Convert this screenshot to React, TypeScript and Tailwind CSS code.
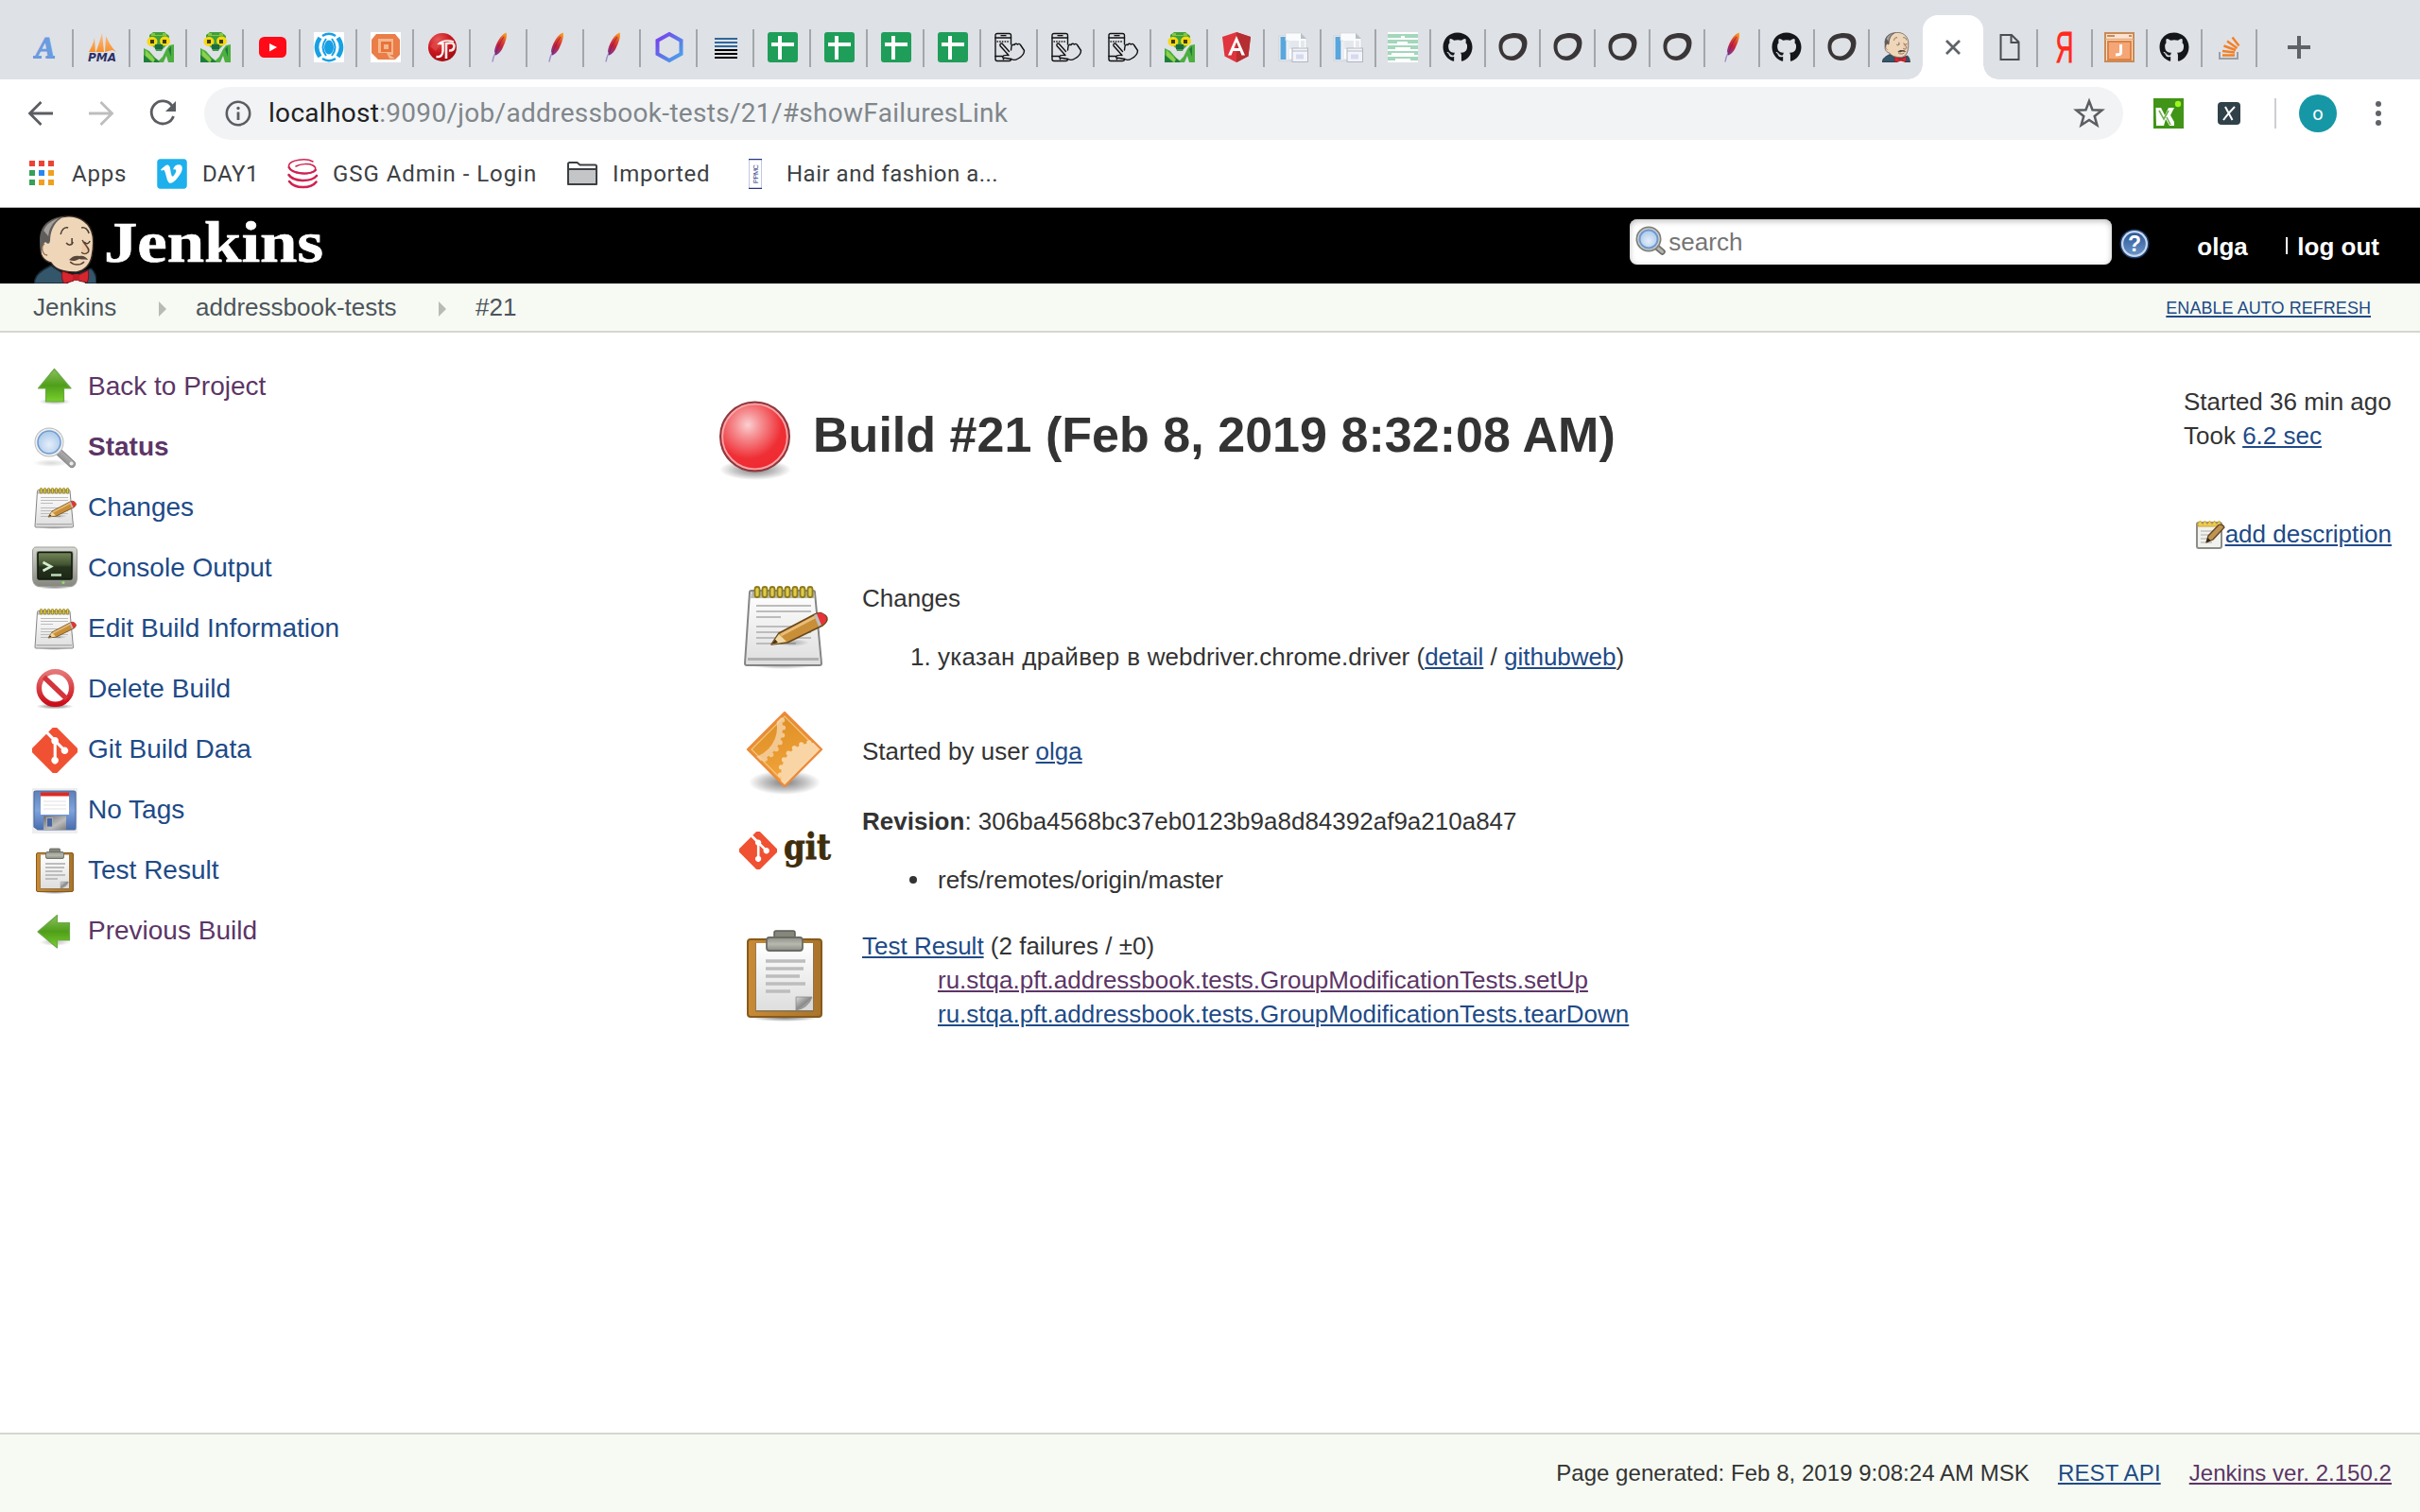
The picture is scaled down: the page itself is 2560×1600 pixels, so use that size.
import React from "react";
import { FaGitAlt, FaGithub, FaVimeo } from "react-icons/fa";

const HELV = "font-['Liberation_Sans',Arial,sans-serif]";
const UI = "font-[Roboto,sans-serif]";

function Svg({ s = 32, vb = "0 0 32 32", children, className = "" }: { s?: number; vb?: string; children: React.ReactNode; className?: string }) {
  return (
    <svg width={s} height={s} viewBox={vb} className={"block shrink-0 overflow-visible " + className}>
      {children}
    </svg>
  );
}

/* ---------- shared gradients ---------- */
function Defs() {
  return (
    <svg width="0" height="0" className="absolute">
      <defs>
        <linearGradient id="feather" x1="0.7" y1="0" x2="0.3" y2="1">
          <stop offset="0" stopColor="#f79a23" />
          <stop offset="0.3" stopColor="#e2492b" />
          <stop offset="0.6" stopColor="#c4203f" />
          <stop offset="1" stopColor="#7b3a97" />
        </linearGradient>
        <linearGradient id="hex" x1="0" y1="0" x2="1" y2="1">
          <stop offset="0" stopColor="#7a3cf0" />
          <stop offset="0.5" stopColor="#5f72e8" />
          <stop offset="1" stopColor="#48a8ea" />
        </linearGradient>
        <linearGradient id="pma" x1="0" y1="0" x2="0" y2="1">
          <stop offset="0" stopColor="#fbc08a" />
          <stop offset="1" stopColor="#f7902a" />
        </linearGradient>
        <linearGradient id="green" x1="0" y1="0" x2="0" y2="1">
          <stop offset="0" stopColor="#8cc05e" />
          <stop offset="0.5" stopColor="#4f9e1a" />
          <stop offset="1" stopColor="#78d02c" />
        </linearGradient>
        <radialGradient id="lens" cx="0.5" cy="0.6" r="0.6">
          <stop offset="0" stopColor="#e6effa" />
          <stop offset="1" stopColor="#a9c8ea" />
        </radialGradient>
        <linearGradient id="handle" x1="0" y1="1" x2="1" y2="0">
          <stop offset="0" stopColor="#7d7d7d" />
          <stop offset="1" stopColor="#c4c4c4" />
        </linearGradient>
        <linearGradient id="paper" x1="0" y1="0" x2="0" y2="1">
          <stop offset="0" stopColor="#ffffff" />
          <stop offset="1" stopColor="#dedede" />
        </linearGradient>
        <linearGradient id="bezel" x1="0" y1="0" x2="0" y2="1">
          <stop offset="0" stopColor="#d6d8d2" />
          <stop offset="1" stopColor="#85877f" />
        </linearGradient>
        <linearGradient id="crt" x1="0" y1="0" x2="0" y2="1">
          <stop offset="0" stopColor="#75875a" />
          <stop offset="0.45" stopColor="#435432" />
          <stop offset="0.55" stopColor="#26331d" />
          <stop offset="1" stopColor="#1c2715" />
        </linearGradient>
        <linearGradient id="stop" x1="0" y1="0" x2="0" y2="1">
          <stop offset="0" stopColor="#e67676" />
          <stop offset="1" stopColor="#cc0c18" />
        </linearGradient>
        <linearGradient id="floppy" x1="0" y1="0" x2="0" y2="1">
          <stop offset="0" stopColor="#5d80b8" />
          <stop offset="0.5" stopColor="#7fa4dc" />
          <stop offset="1" stopColor="#4a6cae" />
        </linearGradient>
        <linearGradient id="shutter" x1="0" y1="0" x2="1" y2="1">
          <stop offset="0" stopColor="#6d6d6d" />
          <stop offset="0.6" stopColor="#bcbcbc" />
          <stop offset="1" stopColor="#7e7e7e" />
        </linearGradient>
        <linearGradient id="board" x1="0" y1="0" x2="1" y2="0">
          <stop offset="0" stopColor="#c98a35" />
          <stop offset="1" stopColor="#a9742b" />
        </linearGradient>
        <linearGradient id="clip" x1="0" y1="0" x2="0" y2="1">
          <stop offset="0" stopColor="#8f9087" />
          <stop offset="0.5" stopColor="#b7b8ae" />
          <stop offset="1" stopColor="#8b8c83" />
        </linearGradient>
        <linearGradient id="curl" x1="0" y1="0" x2="1" y2="1">
          <stop offset="0" stopColor="#dddddd" />
          <stop offset="0.5" stopColor="#8a8a8a" />
          <stop offset="1" stopColor="#f4f4f4" />
        </linearGradient>
        <radialGradient id="ball" cx="0.4" cy="0.33" r="0.7">
          <stop offset="0" stopColor="#fbd0d2" />
          <stop offset="0.25" stopColor="#f69295" />
          <stop offset="0.7" stopColor="#ef2f35" />
          <stop offset="1" stopColor="#ef2930" />
        </radialGradient>
        <radialGradient id="shade">
          <stop offset="0" stopColor="#000" stopOpacity="0.5" />
          <stop offset="0.6" stopColor="#000" stopOpacity="0.22" />
          <stop offset="1" stopColor="#000" stopOpacity="0" />
        </radialGradient>
        <linearGradient id="sign" x1="0" y1="0" x2="0.3" y2="1">
          <stop offset="0" stopColor="#d98a22" />
          <stop offset="1" stopColor="#f3a43a" />
        </linearGradient>
        <radialGradient id="jr" cx="0.35" cy="0.25" r="0.9">
          <stop offset="0" stopColor="#ea5a5a" />
          <stop offset="0.5" stopColor="#c9141c" />
          <stop offset="1" stopColor="#8e0a10" />
        </radialGradient>
        <linearGradient id="help" x1="0" y1="0" x2="0" y2="1">
          <stop offset="0" stopColor="#2b5797" />
          <stop offset="1" stopColor="#6a94c8" />
        </linearGradient>
        <clipPath id="diamond">
          <path d="M48 6 L86 45 L48 84 L9 45 Z" />
        </clipPath>
      </defs>
    </svg>
  );
}

/* ---------- tab favicons ---------- */
const LetterA = () => (
  <Svg>
    <path d="M3 26.500 H12 M17 26.500 H26" stroke="#6b9be0" strokeWidth="3" />
    <text x="16" y="27" fontSize="32" fontWeight="700" fontStyle="italic" textAnchor="middle" fill="#6b9be0" stroke="#6b9be0" strokeWidth="1" fontFamily="Liberation Serif">A</text>
  </Svg>
);
const Pma = () => (
  <Svg>
    <path d="M2 21 C4 17 7 12 8 6 L9 21 Z M9.500 21 C12 14 14 8 16 1 L18 21 Z M19 21 L20 4 C23 10 25 15 31 21 L27 19 Z" fill="url(#pma)" />
    <text x="16" y="31" fontSize="12.500" fontWeight="700" fontStyle="italic" textAnchor="middle" textLength="30" lengthAdjust="spacingAndGlyphs" fill="#2d3067" fontFamily="DejaVu Sans">PMA</text>
  </Svg>
);
const Frog = () => (
  <Svg>
    <path d="M6 3 L10 0 L22 0 L27 4 L26 12 L20 18 L19 20 L13 20 L12 17 L6 12 Z" fill="#3f9f3d" />
    <path d="M8 1 H12 V3 H20 V1 H24 V4 H8 Z" fill="#86c440" />
    <path d="M0 17 L6 20 L12 27 L16 30 L20 26 L24 18 L27 14 L32 13 V32 H26 L24 25 L21 32 H0 Z" fill="#4caf3f" />
    <path d="M0 24 L9 32 H0 Z M26 18 L29 15 V26 Z M10 26 L17 32 H11 Z" fill="#1f7d3a" />
    <path d="M2 19 L12 29 L10 32 L2 25 Z" fill="#8ed04d" />
    <ellipse cx="9" cy="10" rx="5.500" ry="5" fill="#f7d90f" />
    <ellipse cx="22.500" cy="9.500" rx="5.500" ry="5" fill="#f7d90f" />
    <rect x="7" y="8" width="4" height="4" fill="#3c3a12" />
    <rect x="20" y="8" width="4" height="4" fill="#3c3a12" />
    <path d="M12 13 H20 V18 H12 Z" fill="#1c6b45" />
  </Svg>
);
const YouTube = () => (
  <Svg>
    <rect x="2" y="5" width="29" height="22" rx="5.500" fill="#ff0a16" />
    <path d="M13 12 L21 16 L13 20.500 Z" fill="#fff" />
  </Svg>
);
const BlueO = () => (
  <Svg>
    <rect width="32" height="32" fill="#fff" />
    <g fill="none" stroke="#18a0e4">
      <path d="M9 4 Q16 -0.500 23 4" strokeWidth="2.600" />
      <path d="M9 28 Q16 32.500 23 28" strokeWidth="2.600" />
      <path d="M6.500 6 Q-0.500 16 6.500 26" strokeWidth="4.600" />
      <path d="M25.500 6 Q32.500 16 25.500 26" strokeWidth="4.600" />
      <path d="M13 7 Q6 16 13 25" strokeWidth="2" />
      <path d="M19 7 Q26 16 19 25" strokeWidth="2" />
    </g>
    <ellipse cx="16" cy="16" rx="5" ry="7.500" fill="#18a0e4" />
  </Svg>
);
const OrangeQ = () => (
  <Svg>
    <rect width="32" height="32" fill="#fff" />
    <path d="M6 2 H26 L31 8 V24 L26 29 H8 L1 22 V8 Z" fill="#ea7d48" />
    <path d="M8 7 H24 V24 H20 L26 28 H20 L17 22 H8 Z" fill="#f5b78d" />
    <rect x="11" y="10" width="11" height="11" fill="#e8743c" />
    <rect x="14" y="13" width="5" height="5" fill="#f5b78d" />
  </Svg>
);
const JRebel = () => (
  <Svg>
    <circle cx="16" cy="16" r="15" fill="url(#jr)" />
    <path d="M3 15 Q12 5 28 8 Q16 8 9 20 Z" fill="#e04848" opacity="0.700" />
    <path d="M13 12 H16.500 V20 Q16 27 9.500 26" stroke="#fff" strokeWidth="2.400" fill="none" />
    <path d="M20 28 V12 Q28.500 10 28.500 15 Q28 20 23 19.500" stroke="#f6eaea" strokeWidth="2.600" fill="none" />
    <path d="M11 13 Q18 7 28 10" stroke="#fff" strokeWidth="1.600" fill="none" />
  </Svg>
);
const Feather = () => (
  <Svg>
    <path d="M23.500 0.500 C25 3 23 10 20 16 C18 20.500 15 24 12 24.500 L11 20 C12 13 18 2 23.500 0.500 Z" fill="url(#feather)" />
    <path d="M12 22 C10.500 25 9.500 28 9 31.500" stroke="#9c8fc6" strokeWidth="1.400" fill="none" />
    <path d="M21 5 C17 11 14 17 12 24" stroke="#7e1740" strokeWidth="0.700" fill="none" />
  </Svg>
);
const Hexagon = () => (
  <Svg>
    <path d="M16 2 L28.500 9 V23 L16 30 L3.500 23 V9 Z" fill="none" stroke="url(#hex)" strokeWidth="4" />
  </Svg>
);
const Lines = () => (
  <Svg>
    <path d="M4 7 H28 M4 11 H28 M4 15 H28" stroke="#2f679c" strokeWidth="2" />
    <path d="M4 19 H28 M4 23 H28 M4 27 H28" stroke="#000" strokeWidth="2" />
  </Svg>
);
const Sheet = () => (
  <Svg>
    <rect width="32" height="32" rx="3" fill="#1f9e5a" />
    <path d="M11 4 H15 V29 H11 Z M4 11 H28 V15 H4 Z" fill="#fff" />
  </Svg>
);
const PhoneHand = () => (
  <Svg>
    <g fill="none" stroke="#111" strokeWidth="1.400" strokeLinejoin="round" strokeLinecap="round">
      <path d="M17.500 13 V3.500 Q17.500 1.500 15.500 1.500 H3 Q1 1.500 1 3.500 V28.500 Q1 30.500 3 30.500 H15.500 Q17.500 30.500 17.500 28.500" />
      <path d="M1 6 H17.500 M1 25.500 H8" />
      <path d="M3 10 H15.500" strokeDasharray="0.500 2.200" />
      <path d="M15.500 20.500 L8 12 Q5.500 11.500 6 14.500 L15 24.500 Q9 24 8.500 26 Q8.500 27.500 12 27.500 L18 28.500 Q21 30.500 25 28 Q31.500 24.500 31.500 19.500 L27.500 13.500 Q26 11.500 24.500 13 Q22.500 11.500 21 13.500 Q19 12.500 18 15 L17.500 19" />
    </g>
    <rect x="6.500" y="3" width="6" height="1.300" fill="#111" />
    <circle cx="9.500" cy="28.500" r="0.900" fill="#111" />
  </Svg>
);
const AngularMark = () => (
  <Svg>
    <path d="M16 0 L31 5 L28.500 25.500 L16 32 L3.500 25.500 L1 5 Z" fill="#e0343e" />
    <path d="M16 0 L31 5 L28.500 25.500 L16 32 Z" fill="#b52e31" />
    <path d="M16 4 L7 24.500 H10.500 L12.300 20 H19.700 L21.500 24.500 H25 Z M16 10.500 L18.600 17 H13.400 Z" fill="#fff" fillRule="evenodd" />
  </Svg>
);
const DocPages = () => (
  <Svg>
    <rect x="1" y="4" width="25" height="26" fill="#f4f6f8" stroke="#c6cdd4" strokeWidth="0.800" />
    <rect x="2.500" y="5" width="6" height="24" fill="#5aa6dc" />
    <path d="M8 1 H24 L30 7 V29 H11 V9 H8 Z" fill="#fafbfc" stroke="#d3d6da" strokeWidth="0.700" />
    <path d="M24 1 V7 H30 Z" fill="#b9bfc5" />
    <path d="M12 9 H22 V18 H12 Z M24 9 H28 V16 H24 Z" fill="#e4e8ee" />
    <rect x="15" y="17" width="16.500" height="14.500" fill="#f3f4fb" stroke="#a4a8b0" strokeWidth="0.800" />
    <path d="M15 20 H31" stroke="#b4b9c2" strokeWidth="1" />
    <rect x="19" y="23.500" width="8" height="5" fill="#d6daee" />
  </Svg>
);
const GreenStripes = () => (
  <Svg>
    <rect width="32" height="32" fill="#fff" />
    <path d="M0 2 H32 V6 H0 Z M0 8 H32 V12 H0 Z M0 14 H32 V18 H0 Z M0 20 H32 V24 H0 Z M0 26 H32 V30 H0 Z" fill="#a3d7bb" />
    <path d="M14 4 H18 V6 H14 Z M10 10 H21 V12 H10 Z M8 16 H24 V18 H8 Z M4 22 H28 V24 H4 Z M8 28 H24 V30 H8 Z" fill="#fff" />
  </Svg>
);
const GitHub = () => <FaGithub size={32} color="#14161a" className="block shrink-0" />;
const Ring = () => (
  <Svg>
    <path
      d="M14 1.500 C22 0 32 2 31.500 12 C31 24 22 30.500 15 30 C6 29.500 1 22 1.500 14 C2 6 7 2.500 14 1.500 Z M14.500 6.500 C8 7.500 5 11 5.500 17 C6 22 9 25.500 14.500 25.500 C20 25.500 26 19 26 13 C26 7 20 5.500 14.500 6.500 Z"
      fill="#3a3637"
      fillRule="evenodd"
    />
  </Svg>
);
function Butler({ s = 32 }: { s?: number }) {
  return (
    <svg width={s * 0.92} height={s} viewBox="0 0 66 72" className="block shrink-0">
      <path d="M0 72 C1 62 8 58 18 53 L32 62 H46 L60 56 C65 60 66 66 66 72 Z" fill="#33566b" stroke="#1a2a35" strokeWidth="1.500" />
      <path d="M7 25 C6 10 18 2 34 1 C48 0 60 8 62 22 C63 30 62 38 61 43 C59 53 54 58 45 60 C33 60 22 57 18 50 C10 48 6 42 7 35 C8 30 9 28 7 25 Z" fill="#efd6b8" stroke="#3a2f28" strokeWidth="1.300" />
      <path d="M6 30 C5 12 14 3 32 1 C22 6 18 14 17 24 C17 32 14 30 12 28 C9 30 8 34 8 38 C6 36 6 33 6 30 Z" fill="#5f5c5c" />
      <path d="M10 16 C13 9 19 5 26 3 C19 8 16 14 15 22 Z" fill="#a39f9c" />
      <path d="M28 20 C29 15 32 12 36 13 M50 13 C54 12 57 15 58 19" stroke="#4a3d34" strokeWidth="1.500" fill="none" />
      <path d="M34 29 C36 32 40 32 41 28 M40 24 V29 M53 28 C55 31 58 30 59 27" stroke="#4a3d34" strokeWidth="1.500" fill="none" />
      <path d="M51 26 C53 31 60 35 57 39 C55 41 52 41 50 39" stroke="#5a4335" strokeWidth="1.500" fill="#efc9a6" />
      <path d="M37 47 C40 43 44 42 48 43 C52 42 55 44 57 47 C53 46 50 47 48 46 C44 48 41 49 37 47 Z" fill="#5a473c" />
      <path d="M38 49 C42 53 49 53 53 49" stroke="#5a4335" strokeWidth="1.500" fill="none" />
      <path d="M11 30 C7 32 8 42 14 42" stroke="#8a6a50" strokeWidth="1.300" fill="none" />
      <path d="M38 66 L50 66 L54 72 H36 Z" fill="#f4f4f4" />
      <path d="M30 59 L42 63 V69 L32 72 C29 68 29 63 30 59 Z M57 58 L47 63 V69 L56 71 C58 67 58 62 57 58 Z" fill="#d8262f" stroke="#7c1218" strokeWidth="1" />
      <rect x="41" y="62" width="7" height="7" rx="2" fill="#c01f28" />
    </svg>
  );
}
const FileIcon = () => (
  <Svg>
    <path d="M6.500 3 H18 L25.500 10.500 V29 H6.500 Z M17.500 3 V11 H25.500" fill="none" stroke="#4a4d51" strokeWidth="2" />
  </Svg>
);
const Ya = () => (
  <Svg>
    <text x="16" y="32" fontSize="46" textAnchor="middle" textLength="19" lengthAdjust="spacingAndGlyphs" fill="#ff2a1c" stroke="#ff2a1c" strokeWidth="0.800" fontFamily="Liberation Sans">Я</text>
  </Svg>
);
const OrangeJ = () => (
  <Svg>
    <rect x="1" y="1" width="30" height="30" fill="#fbe3d0" stroke="#c98a58" strokeWidth="2" />
    <path d="M3 3 H11 V5 H3 Z M26 3 H29 V5 H26 Z" fill="#c98a58" />
    <path d="M1 7.500 H31" stroke="#e3a97d" strokeWidth="1.500" />
    <rect x="4" y="10" width="24" height="19" fill="#f5a676" stroke="#dd8244" strokeWidth="2" />
    <path d="M17.500 13 V22 Q17.500 24 12 24" stroke="#fff" strokeWidth="3" fill="none" />
  </Svg>
);
const StackO = () => (
  <Svg>
    <path d="M6 21 V28 H25 V21" stroke="#9aa0a6" strokeWidth="2" fill="none" />
    <path d="M9 24.500 H22 M9 20 L22 21.500 M10.500 14.500 L23 19 M14 9.500 L24.500 17 M19.500 5.500 L26.500 14.500" stroke="#f48024" strokeWidth="2.400" />
  </Svg>
);

const wideTabs = [LetterA, Pma, Frog, Frog, YouTube, BlueO, OrangeQ, JRebel, Feather, Feather, Feather, Hexagon, Lines, Sheet, Sheet, Sheet, Sheet, PhoneHand, PhoneHand, PhoneHand, Frog, AngularMark, DocPages];
const narrowTabs = [DocPages, GreenStripes, GitHub, Ring, Ring, Ring, Ring, Feather, GitHub, Ring];
const rightTabs = [FileIcon, Ya, OrangeJ, GitHub, StackO];

function Tab({ w, children, sep = true }: { w: string; children: React.ReactNode; sep?: boolean }) {
  return (
    <div className={"relative flex h-full shrink-0 items-center justify-center " + w}>
      {children}
      {sep && <span className="absolute right-0 top-[15px] h-10 w-[2px] bg-[#a3a7ab]" />}
    </div>
  );
}

function TabStrip() {
  return (
    <div className="flex h-[84px] items-end bg-[#dee1e6] pl-[18px]">
      <div className="flex h-[68px]">
        {wideTabs.map((I, i) => (
          <Tab key={i} w="w-[60px]"><I /></Tab>
        ))}
        {narrowTabs.map((I, i) => (
          <Tab key={i} w="w-[58px] pr-[2px]"><I /></Tab>
        ))}
        <Tab w="w-14" sep={false}><Butler /></Tab>
        <div className="relative flex h-[68px] w-16 shrink-0 items-center justify-center rounded-t-[16px] bg-white">
          <span className="absolute bottom-0 -left-4 size-4 bg-[radial-gradient(circle_at_0_0,transparent_15.5px,white_16px)]" />
          <span className="absolute bottom-0 -right-4 size-4 bg-[radial-gradient(circle_at_100%_0,transparent_15.5px,white_16px)]" />
          <Svg s={16} vb="0 0 16 16"><path d="M1 1 L15 15 M15 1 L1 15" stroke="#5f6368" strokeWidth="2.800" /></Svg>
        </div>
        {rightTabs.map((I, i) => (
          <Tab key={i} w="w-[58px] pr-[2px]"><I /></Tab>
        ))}
        <div className="flex w-[88px] items-center justify-center">
          <Svg s={24} vb="0 0 24 24"><path d="M12 0 V24 M0 12 H24" stroke="#5f6368" strokeWidth="4" /></Svg>
        </div>
      </div>
    </div>
  );
}

/* ---------- toolbar ---------- */
function Arrow({ color, flip = false }: { color: string; flip?: boolean }) {
  return (
    <Svg className={flip ? "-scale-x-100" : ""}>
      <path d="M29 16 H5 M16.500 4 L4.500 16 L16.500 28" stroke={color} strokeWidth="2.800" fill="none" />
    </Svg>
  );
}

function Toolbar() {
  return (
    <div className="flex h-[72px] items-center bg-white pl-[27px]">
      <Arrow color="#5a5d61" />
      <div className="ml-8"><Arrow color="#bdbdbd" flip /></div>
      <div className="ml-[33px]">
        <Svg>
          <path d="M26 8 A 12 12 0 1 0 27.500 19" fill="none" stroke="#5a5d61" strokeWidth="2.800" />
          <path d="M30 3 V14 H19 Z" fill="#5a5d61" />
        </Svg>
      </div>
      <div className="ml-7 flex h-14 w-[2030px] items-center rounded-full bg-[#f1f3f4] pl-5">
        <Svg>
          <circle cx="16" cy="16" r="12.200" fill="none" stroke="#5a5d61" strokeWidth="2.600" />
          <path d="M16 14.500 V23" stroke="#5a5d61" strokeWidth="2.800" />
          <circle cx="16" cy="10.500" r="1.700" fill="#5a5d61" />
        </Svg>
        <div className={"ml-4 flex-1 whitespace-nowrap text-[28px] leading-[56px] tracking-[0.3px] text-[#80868b] " + UI}>
          <span className="text-[#202124]">localhost</span>:9090/job/addressbook-tests/21/#showFailuresLink
        </div>
        <Svg className="mr-5">
          <path d="M16 3 L19.500 12.300 L29.500 12.700 L21.700 18.900 L24.400 28.500 L16 23 L7.600 28.500 L10.300 18.900 L2.500 12.700 L12.500 12.300 Z" fill="none" stroke="#5a5d61" strokeWidth="2.500" />
        </Svg>
      </div>
      <div className="ml-8 flex items-center">
        <Svg>
          <rect width="32" height="32" fill="#409417" />
          <path d="M2.500 10 H8 L12 18 L16 10 H22 L18 18 L22 25 V29 H17 L13 22 L11 29 H3 Z" fill="#fff" />
          <path d="M6 13 L11 22 L16 13 M14 20 L18 28" stroke="#6fb04e" strokeWidth="1.600" fill="none" />
          <circle cx="26" cy="6" r="3.200" fill="#9cf51e" />
        </Svg>
        <div className="ml-9 flex size-6 items-center justify-center rounded-[4px] bg-[#31414a]">
          <Svg s={24} vb="0 0 24 24"><path d="M8 5 L15.500 19 M18 5 Q11 12 6 19" stroke="#fff" strokeWidth="2" fill="none" /></Svg>
        </div>
        <span className="ml-9 h-8 w-[2px] bg-[#ccced1]" />
        <div className={"ml-6 flex size-10 items-center justify-center rounded-full bg-[#1697a6] text-[20px] text-white " + UI}>o</div>
        <div className="ml-[41px] flex flex-col gap-[4px]">
          <span className="size-[6px] rounded-full bg-[#5f6368]" />
          <span className="size-[6px] rounded-full bg-[#5f6368]" />
          <span className="size-[6px] rounded-full bg-[#5f6368]" />
        </div>
      </div>
    </div>
  );
}

/* ---------- bookmarks ---------- */
const AppsIcon = () => (
  <Svg>
    <path d="M3 2 h6 v6 h-6 Z M13 2 h6 v6 h-6 Z M23 2 h6 v6 h-6 Z" fill="#ea4335" />
    <path d="M3 12 h6 v6 h-6 Z M3 22 h6 v6 h-6 Z" fill="#34a05a" />
    <path d="M13 12 h6 v6 h-6 Z" fill="#2a86f5" />
    <path d="M23 12 h6 v6 h-6 Z M13 22 h6 v6 h-6 Z M23 22 h6 v6 h-6 Z" fill="#f0a020" />
  </Svg>
);
const Spiral = () => (
  <Svg>
    <g fill="none" stroke="#cf2350" strokeLinecap="round">
      <path d="M27 3 C20 -1 3 1 1.500 7 C1 13 14 17 24 15 C31 13 31 9 27 7 C23 5 14 5 9 8" strokeWidth="1.500" />
      <path d="M1.500 9 C5 16.500 24 17.500 30 12" strokeWidth="2.200" />
      <path d="M1.500 17 C6 24.500 25 25 31 18" strokeWidth="2.600" />
      <path d="M2 24 C8 32 25 32 30.500 24.500" strokeWidth="2.600" />
    </g>
  </Svg>
);
const Folder = () => (
  <Svg>
    <path d="M1 27 V5.500 Q1 4 2.500 4 H10.500 L13.500 6.500 H29.500 Q31 6.500 31 8 V27 Z" fill="#fff" stroke="#3c3f43" strokeWidth="2" strokeLinejoin="round" />
    <path d="M2 11 H30 V26 H2 Z" fill="#c4c5c6" />
    <path d="M1 11 H31" stroke="#3c3f43" strokeWidth="2" />
  </Svg>
);
const Ppmc = () => (
  <Svg>
    <rect x="8.500" y="0.500" width="13" height="31" fill="#fff" stroke="#c3c7e2" />
    <path d="M8 0.600 H22 M8 31.400 H22" stroke="#263485" strokeWidth="1.400" />
    <text transform="translate(18 26) rotate(-90)" fontSize="7.500" textLength="20" fill="#2d3a86" fontFamily="Liberation Sans">PPMC</text>
  </Svg>
);

const bookmarks = [
  { w: "w-[138px]", t: "tracking-[0.8px]", icon: <AppsIcon />, label: "Apps" },
  { w: "w-[138px]", t: "tracking-[0.5px]", icon: <FaVimeo size={36} color="#1eb0ec" className="-mx-0.5 block shrink-0" />, label: "DAY1" },
  { w: "w-[296px]", t: "tracking-[0.95px]", icon: <Spiral />, label: "GSG Admin - Login" },
  { w: "w-[184px]", t: "tracking-[0.7px]", icon: <Folder />, label: "Imported" },
  { w: "w-[300px]", t: "tracking-[0.5px]", icon: <Ppmc />, label: "Hair and fashion a..." },
];

function Bookmarks() {
  return (
    <div className="flex h-16 items-center border-b border-[#b5b5b5] bg-white pb-[7px] pl-7">
      {bookmarks.map((b) => (
        <div key={b.label} className={"flex shrink-0 items-center gap-4 " + b.w}>
          {b.icon}
          <span className={"whitespace-nowrap text-[24px] text-[#3c4043] " + b.t + " " + UI}>{b.label}</span>
        </div>
      ))}
    </div>
  );
}

/* ---------- jenkins header ---------- */
function Header() {
  return (
    <div className={"flex h-20 bg-black text-white " + HELV}>
      <div className="flex pl-9 pt-2">
        <Butler s={72} />
        <svg width="250" height="72" className="ml-[6px] block overflow-visible">
          <text x="2" y="49" fontSize="61" fontWeight="700" textLength="232" lengthAdjust="spacingAndGlyphs" fill="#fff" stroke="#fff" strokeWidth="0.600" fontFamily="Liberation Serif">Jenkins</text>
        </svg>
      </div>
      <div className="ml-auto flex items-start">
        <div className="mt-3 flex h-12 w-[510px] items-center rounded-[8px] bg-white pl-[6px] shadow-[inset_0_2px_6px_#bbb]">
          <Svg className="mt-[-2px]">
            <path d="M22 22 L28.500 27.500" stroke="#6f6f6a" strokeWidth="6.500" strokeLinecap="round" />
            <path d="M22 22 L28.500 27.500" stroke="#b5b5b0" strokeWidth="3" strokeLinecap="round" />
            <circle cx="14" cy="14" r="13.500" fill="#80807a" />
            <circle cx="14" cy="14" r="11.800" fill="#cfcfca" />
            <circle cx="14" cy="14" r="9.500" fill="url(#lens)" stroke="#6d98d2" strokeWidth="2" />
          </Svg>
          <span className="ml-[3px] text-[26px] leading-[50px] text-[#757575]">search</span>
        </div>
        <Svg className="ml-2 mt-[22px]">
          <circle cx="16" cy="16" r="15.500" fill="#1d3f73" />
          <circle cx="16" cy="16" r="14" fill="#c9d8ec" />
          <circle cx="16" cy="16" r="11.800" fill="url(#help)" />
          <text x="16" y="24" fontSize="23" fontWeight="700" textAnchor="middle" fill="#fff" fontFamily="Liberation Sans">?</text>
        </Svg>
        <div className="flex h-20 items-center text-[26px] font-bold leading-[82px]">
          <span className="ml-[50px] mt-[2px] w-[94px]">olga</span>
          <span className="mr-[10px] h-[18px] w-[2px] bg-white" />
          <span className="mr-[43px] mt-[2px]">log out</span>
        </div>
      </div>
    </div>
  );
}

const Chevron = () => (
  <Svg s={16} vb="0 0 16 16" className="mt-[3px]"><path d="M4 0 L12 8 L4 16 Z" fill="#b8bab6" /></Svg>
);

function Breadcrumbs() {
  return (
    <div className={"flex h-[52px] items-center border-b-2 border-[#d3d7cf] bg-[#f6faf2] pl-[35px] pr-[52px] text-[26px] leading-[50px] text-[#4d545d] " + HELV}>
      <span className="w-[129px]">Jenkins</span>
      <Chevron />
      <span className="ml-[27px] w-[253px]">addressbook-tests</span>
      <Chevron />
      <span className="ml-[27px]">#21</span>
      <a className="ml-auto mt-px text-[18px] tracking-[0.05px] text-[#204a87] underline decoration-2 underline-offset-[2px]">ENABLE AUTO REFRESH</a>
    </div>
  );
}

/* ---------- page icons ---------- */
const UpArrow = () => (
  <Svg s={48} vb="0 0 48 48">
    <ellipse cx="24" cy="39" rx="17" ry="3.500" fill="url(#shade)" opacity="0.600" />
    <path d="M23.500 4.500 L41 25 H33.500 V39 H14.500 V25 H6.500 Z" fill="url(#green)" stroke="#6aa843" strokeWidth="1.200" strokeLinejoin="round" />
  </Svg>
);
const LeftArrow = () => (
  <Svg s={48} vb="0 0 48 48">
    <ellipse cx="24" cy="35" rx="16" ry="4" fill="url(#shade)" opacity="0.500" />
    <path d="M6 24 L26.500 6.500 V14.500 H39.500 V33 H26.500 V41 Z" fill="url(#green)" stroke="#6aa843" strokeWidth="1.200" strokeLinejoin="round" />
  </Svg>
);
const Magnifier = () => (
  <Svg s={48} vb="0 0 48 48">
    <ellipse cx="20" cy="40" rx="19" ry="4" fill="url(#shade)" opacity="0.300" />
    <path d="M29 29 L42 41" stroke="#8d8d8d" strokeWidth="8" strokeLinecap="round" />
    <path d="M29 29 L42 41" stroke="url(#handle)" strokeWidth="5.500" strokeLinecap="round" />
    <circle cx="41.500" cy="40.500" r="2" fill="#ececec" />
    <circle cx="18" cy="18" r="15.500" fill="#b9b9b9" />
    <circle cx="18" cy="18" r="14.600" fill="#f0f0f0" />
    <circle cx="18" cy="18" r="12" fill="url(#lens)" stroke="#6f9bd0" strokeWidth="1.600" />
  </Svg>
);
function Notepad({ s = 48 }: { s?: number }) {
  return (
    <Svg s={s} vb="0 0 96 96">
      <ellipse cx="46" cy="88" rx="34" ry="4" fill="url(#shade)" opacity="0.700" />
      <path d="M13 9 H78 Q80 9 80 11 L87 86 Q87 88 85 88 H8 Q6 88 6 86 L11 11 Q11 9 13 9 Z" fill="url(#paper)" stroke="#858585" strokeWidth="2" strokeLinejoin="round" />
      <path d="M13 10 H79 L80 17 H12 Z" fill="#b9b9b0" />
      <path d="M9 80 H84 V83 H9 Z" fill="#b0b0b0" />
      {[0, 1, 2, 3, 4, 5, 6, 7].map((i) => (
        <rect key={i} x={16.5 + i * 8} y="5" width="5" height="11" rx="2.500" fill="#e0cc4a" stroke="#8d7b1d" strokeWidth="1.800" />
      ))}
      <path d="M18 25 H76 M18 31 H76 M18 37 H44 M18 47 H70 M18 53 H76 M18 59 H76 M18 65 H60" stroke="#bcbcbc" strokeWidth="2" />
      <ellipse cx="56" cy="64" rx="18" ry="4" fill="url(#shade)" opacity="0.500" />
      <path d="M34 66 L42 54 L80 34 Q86 31 89 34 Q95 37 92 42 Q91 44 88 46 L51 64 Z" fill="#c98f38" stroke="#6a4718" strokeWidth="1.600" strokeLinejoin="round" />
      <path d="M44 56 L80 37" stroke="#e8bd78" strokeWidth="3" />
      <path d="M34 66 L42 55 L50 63 Z" fill="#efd9a4" />
      <path d="M34 66 L38 60.500 L41 64 Z" fill="#4a3311" />
      <path d="M79 35 L82 33.500 L87 45 L84 47 Z" fill="#bdbdbd" />
      <path d="M82 33.500 Q87 31 90 34.500 Q94 38 91.500 42 Q90 44 87 45.500 Z" fill="#e8323a" />
    </Svg>
  );
}
const SmallNote = () => (
  <Svg>
    <rect x="2" y="4" width="26" height="27" rx="2" fill="#f1f1ee" stroke="#8d8d88" strokeWidth="2" />
    <path d="M6 13 H24 M6 17 H22 M6 21 H20 M6 25 H18" stroke="#c2c2c0" strokeWidth="1.600" />
    <path d="M3 5 L5.500 2 L8 6 L10.500 2 L13 6 L15.500 2 L18 6 L20.500 2 L23 6 L25.500 2 L27 5 V8 H3 Z" fill="#edcd55" stroke="#cba52e" strokeWidth="1" />
    <path d="M12 25 L14 18 L25 6.500 Q29 5 31 9 L19 22 Z" fill="#bf9352" stroke="#5f4522" strokeWidth="1.300" strokeLinejoin="round" />
    <path d="M12 25 L13.500 20 L16.500 23 Z" fill="#2e2415" />
  </Svg>
);
const Terminal = () => (
  <Svg s={48} vb="0 0 48 48">
    <ellipse cx="24" cy="43" rx="20" ry="2.500" fill="url(#shade)" />
    <path d="M4 1 H44 Q47.500 1 47.500 6 V34 Q47 42 41 42.500 H7 Q1 42 0.500 34 V6 Q0.500 1 4 1 Z" fill="url(#bezel)" stroke="#9b9d96" />
    <rect x="4.500" y="5" width="39" height="32" rx="2" fill="#8f918a" />
    <rect x="6" y="6.500" width="36" height="28.500" rx="1.500" fill="url(#crt)" stroke="#111a0c" strokeWidth="1.600" />
    <path d="M11.500 17 L20 21.500 L11.500 26" stroke="#d3ecd0" strokeWidth="2.600" fill="none" />
    <path d="M20 30.500 H31" stroke="#b8d8b6" strokeWidth="2.600" />
    <circle cx="33" cy="38.500" r="1.500" fill="#8ae25c" />
  </Svg>
);
const NoEntry = () => (
  <Svg s={48} vb="0 0 48 48">
    <ellipse cx="24" cy="41.500" rx="20" ry="3" fill="url(#shade)" />
    <circle cx="24.500" cy="22" r="17.200" fill="#fff" stroke="url(#stop)" strokeWidth="5.600" />
    <path d="M12.500 10.500 L36.500 33.500" stroke="#d4343c" strokeWidth="5.200" />
  </Svg>
);
const GitDiamond = () => <FaGitAlt size={48} viewBox="7.500 39.500 433 433" color="#f05133" className="block shrink-0" />;
const FloppyIcon = () => (
  <Svg s={48} vb="0 0 48 48">
    <rect width="48" height="48" fill="#eeeeee" />
    <path d="M4 3 H44 Q46 3 46 5 V42 Q46 44 44 44 H6 L2 41 V5 Q2 3 4 3 Z" fill="url(#floppy)" stroke="#4d6da4" strokeWidth="1.200" />
    <rect x="9" y="5" width="30" height="23" fill="#fff" />
    <rect x="9" y="4.500" width="30" height="4" fill="#e02a20" />
    <path d="M12 14 H36 M12 18 H36 M12 22 H36" stroke="#e2e2e2" strokeWidth="1.200" />
    <rect x="12" y="29.500" width="24" height="14.500" fill="url(#shutter)" />
    <rect x="15.500" y="31.500" width="6" height="9.500" fill="#4665a0" stroke="#b8b8b8" strokeWidth="0.800" />
  </Svg>
);
function Clipboard({ s = 48 }: { s?: number }) {
  return (
    <Svg s={s} vb="0 0 96 96">
      <ellipse cx="48" cy="92" rx="36" ry="4" fill="url(#shade)" />
      <rect x="9" y="9" width="78" height="82" rx="3" fill="url(#board)" stroke="#855a1c" strokeWidth="2" />
      <path d="M17 13 H79 V86 H17 Z" fill="#6f716c" opacity="0.550" />
      <path d="M18 13 H78 V84 H18 Z" fill="url(#paper)" />
      <path d="M28 32 H70 M28 40 H68 M28 48 H64 M28 56 H70 M28 64 H54" stroke="#bdbdbd" strokeWidth="3.600" />
      <path d="M60 84 L78 70 V84 Z" fill="#d9d9d9" />
      <path d="M60 84 V70 H77 Q73 82 60 84 Z" fill="url(#curl)" stroke="#8b8b8b" strokeWidth="0.800" />
      <path d="M37 8 V2 Q37 0 39 0 H57 Q59 0 59 2 V8 Z" fill="#85867c" stroke="#5c5d56" strokeWidth="1.500" />
      <rect x="29" y="7" width="38" height="14" rx="3" fill="url(#clip)" stroke="#6a6b64" strokeWidth="1.800" />
    </Svg>
  );
}
const RedBall = () => (
  <Svg s={96} vb="0 0 96 96">
    <ellipse cx="47" cy="81" rx="38" ry="11" fill="url(#shade)" />
    <circle cx="46.500" cy="46" r="36.500" fill="url(#ball)" stroke="#8c3a40" strokeWidth="2" />
    <circle cx="46.500" cy="46" r="34.300" fill="none" stroke="#f8a5a8" strokeWidth="1.800" />
  </Svg>
);
const teeth = (cx: number, cy: number, r: number, n: number, fill: string) =>
  Array.from({ length: n }, (_, i) => {
    const a = (i / n) * Math.PI * 2;
    return <circle key={i} cx={cx + r * Math.cos(a)} cy={cy + r * Math.sin(a)} r="2.600" fill={fill} />;
  });
const GearSign = () => (
  <Svg s={96} vb="0 0 96 96">
    <ellipse cx="48" cy="80" rx="38" ry="13" fill="url(#shade)" />
    <path d="M48 6 L87 45 L48 84 L9 45 Z" fill="url(#sign)" />
    <g clipPath="url(#diamond)">
      <circle cx="8" cy="22" r="35" fill="none" stroke="#f3c890" strokeWidth="6" />
      {teeth(8, 22, 38.5, 30, "#f3c890")}
      <circle cx="78" cy="72" r="34" fill="#f9d5a6" />
      {teeth(78, 72, 34.5, 26, "#f9d5a6")}
    </g>
    <path d="M48 6 L87 45 L48 84 L9 45 Z" fill="none" stroke="#ee8a3a" strokeWidth="2.400" strokeLinejoin="round" />
    <path d="M48 10 L83 45 L48 80 L13 45 Z" fill="none" stroke="#fbd9a8" strokeWidth="1.200" opacity="0.700" />
  </Svg>
);
const GitLogo = () => (
  <div className="flex h-10 w-24 items-center">
    <FaGitAlt size={40} viewBox="7.500 39.500 433 433" color="#f05133" className="block shrink-0" />
    <svg width="52" height="44" className="ml-1 block shrink-0 overflow-visible">
      <text x="3" y="31" fontSize="38" fontWeight="700" textLength="50" lengthAdjust="spacingAndGlyphs" fill="#3f2d0c" stroke="#3f2d0c" strokeWidth="0.800" fontFamily="DejaVu Serif">git</text>
    </svg>
  </div>
);

/* ---------- sidebar ---------- */
const VISITED = "text-[#5c3566]";
const LINK = "text-[#204a87]";
const tasks = [
  { icon: <UpArrow />, label: "Back to Project", c: VISITED },
  { icon: <Magnifier />, label: "Status", c: VISITED + " font-bold" },
  { icon: <Notepad />, label: "Changes", c: LINK },
  { icon: <Terminal />, label: "Console Output", c: LINK },
  { icon: <Notepad />, label: "Edit Build Information", c: LINK },
  { icon: <NoEntry />, label: "Delete Build", c: LINK },
  { icon: <GitDiamond />, label: "Git Build Data", c: LINK },
  { icon: <FloppyIcon />, label: "No Tags", c: LINK },
  { icon: <Clipboard />, label: "Test Result", c: LINK },
  { icon: <LeftArrow />, label: "Previous Build", c: VISITED },
];

function Sidebar() {
  return (
    <nav className="w-[726px] shrink-0 pl-[34px] pt-[25px]">
      {tasks.map((t) => (
        <div key={t.label} className="flex h-16 items-center">
          <div className="mt-[2px]">{t.icon}</div>
          <a className={"ml-[11px] text-[28px] leading-[64px] " + t.c}>{t.label}</a>
        </div>
      ))}
    </nav>
  );
}

function Link({ children, visited = false }: { children: React.ReactNode; visited?: boolean }) {
  return (
    <a className={"underline decoration-2 underline-offset-[2px] " + (visited ? "text-[#5c3566]" : "text-[#204a87]")}>{children}</a>
  );
}

function Main() {
  return (
    <main className="min-w-0 flex-1 pl-[26px] pr-[30px] pt-[62px]">
      <div className="flex h-[196px] justify-between">
        <div className="flex h-24">
          <div className="pt-[2px]"><RedBall /></div>
          <h1 className="ml-[12px] whitespace-nowrap text-[52px] font-bold leading-[92px] tracking-[0.03px]">Build #21 (Feb 8, 2019 8:32:08 AM)</h1>
        </div>
        <div className="-mt-[7px] w-[220px] leading-9">
          <div className="whitespace-nowrap">Started 36 min ago</div>
          <div>Took <Link>6.2 sec</Link></div>
          <div className="mt-[68px] flex items-center justify-end">
            <SmallNote />
            <span className="whitespace-nowrap"><Link>add description</Link></span>
          </div>
        </div>
      </div>
      <div className="grid grid-cols-[96px_1fr] gap-x-[34px] pl-[30px] leading-9">
        <div className="h-[136px] pt-[6px]"><Notepad s={96} /></div>
        <div className="pt-[5px]">
          <div>Changes</div>
          <ol className="mt-[26px] list-decimal pl-20">
            <li>
              <span className="tracking-[0.32px]">указан драйвер в </span>webdriver.chrome.driver (<Link>detail</Link> / <Link>githubweb</Link>)
            </li>
          </ol>
        </div>
        <div className="h-[103px] pt-[2px]"><GearSign /></div>
        <div className="pt-[31px]">Started by user <Link>olga</Link></div>
        <div className="h-[132px] pt-[31px]"><GitLogo /></div>
        <div className="pt-[2px]">
          <div><b>Revision</b>: 306ba4568bc37eb0123b9a8d84392af9a210a847</div>
          <ul className="mt-[26px] pl-[50px]">
            <li className="flex items-center">
              <span className="mr-[22px] size-2 rounded-full bg-[#333]" />
              refs/remotes/origin/master
            </li>
          </ul>
        </div>
        <div className="pt-[4px]"><Clipboard s={96} /></div>
        <div className="pt-[2px]">
          <div><Link>Test Result</Link> (2 failures / ±0)</div>
          <div className="pl-20"><Link visited>ru.stqa.pft.addressbook.tests.GroupModificationTests.setUp</Link></div>
          <div className="pl-20"><Link>ru.stqa.pft.addressbook.tests.GroupModificationTests.tearDown</Link></div>
        </div>
      </div>
    </main>
  );
}

function Footer() {
  return (
    <footer className={"flex h-[84px] items-center justify-end gap-[30px] border-t-2 border-[#d3d7cf] bg-[#f6faf2] pb-px pr-[30px] text-[24px] leading-[80px] tracking-[0.04px] text-[#333] " + HELV}>
      <span>Page generated: Feb 8, 2019 9:08:24 AM MSK</span>
      <span className="tracking-[0.15px]"><Link>REST API</Link></span>
      <Link visited>Jenkins ver. 2.150.2</Link>
    </footer>
  );
}

export default function App() {
  return (
    <div className="flex h-[1600px] w-[2560px] flex-col overflow-hidden bg-white">
      <Defs />
      <TabStrip />
      <Toolbar />
      <Bookmarks />
      <Header />
      <Breadcrumbs />
      <div className={"flex flex-1 text-[26px] text-[#333] " + HELV}>
        <Sidebar />
        <Main />
      </div>
      <Footer />
    </div>
  );
}
